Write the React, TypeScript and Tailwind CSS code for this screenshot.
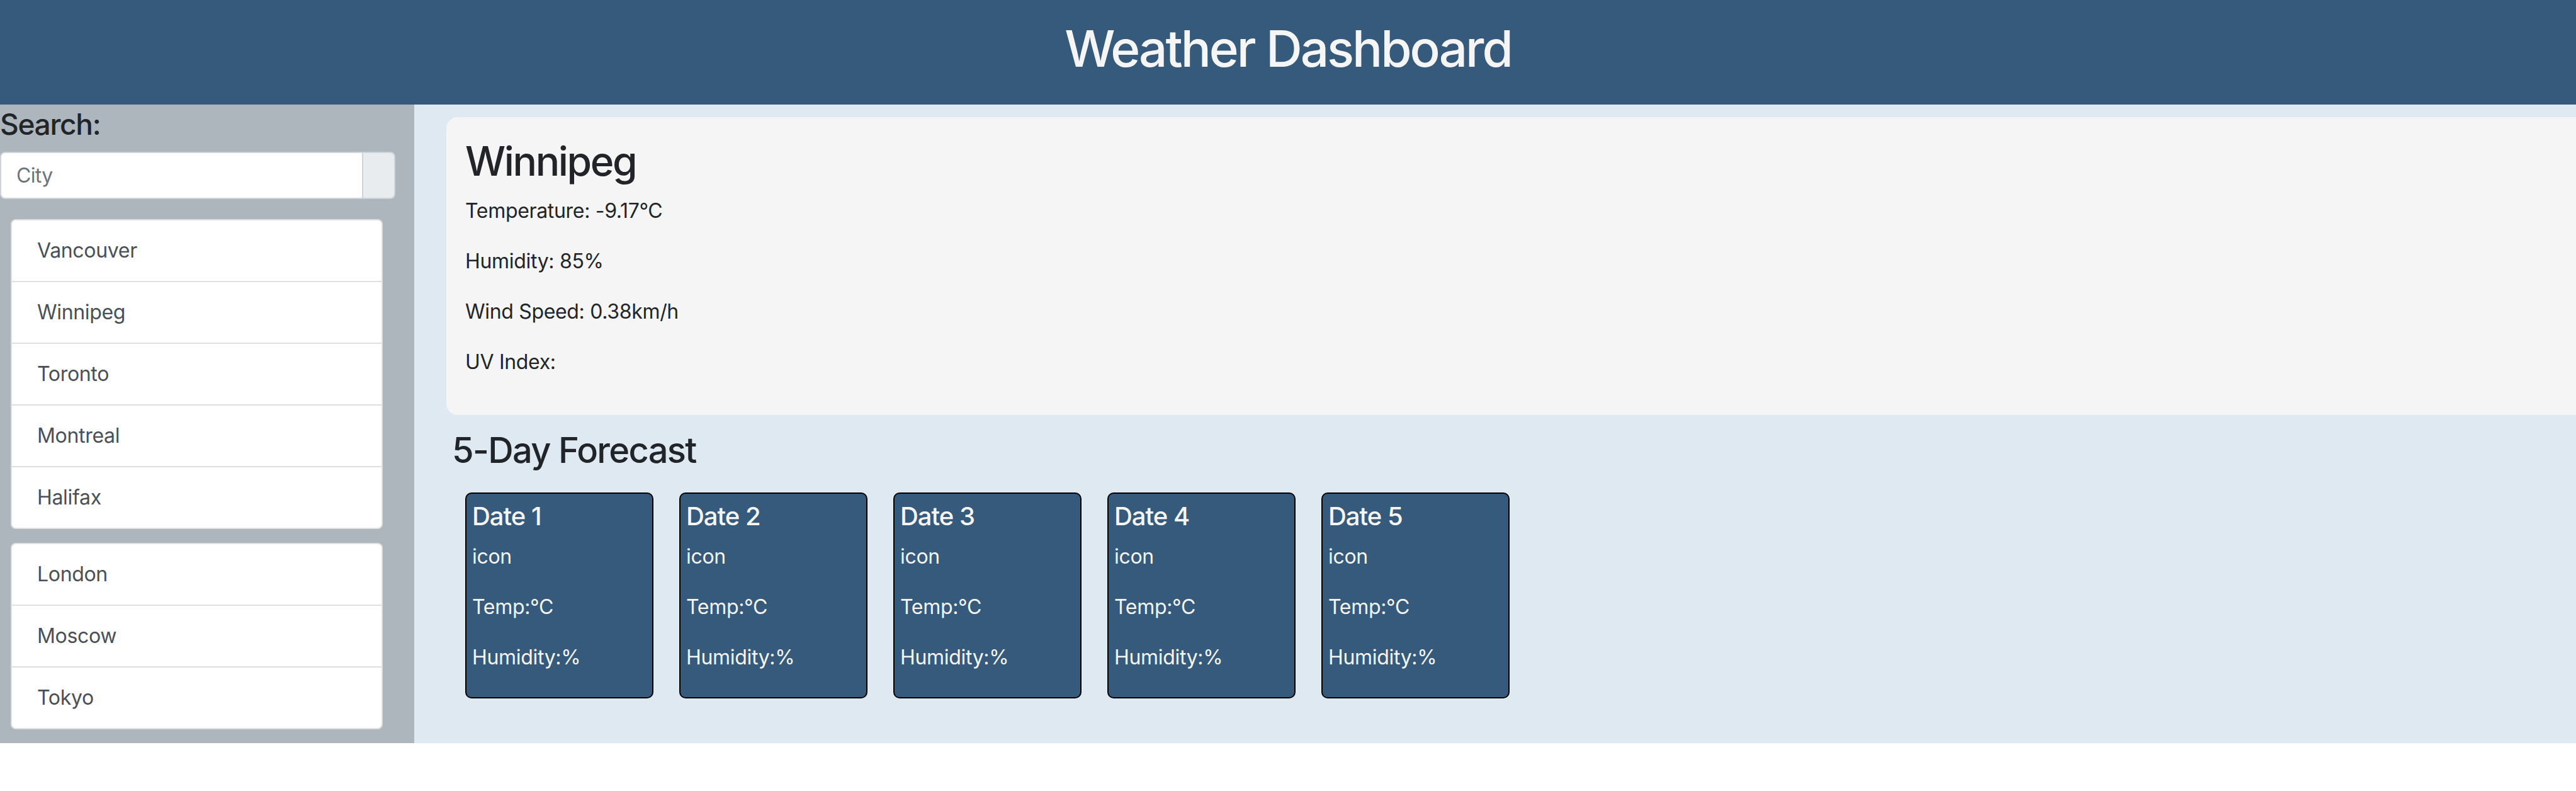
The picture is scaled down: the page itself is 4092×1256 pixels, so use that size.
import React from 'react'

const cityGroups = [
  ['Vancouver', 'Winnipeg', 'Toronto', 'Montreal', 'Halifax'],
  ['London', 'Moscow', 'Tokyo'],
]

const forecast = [1, 2, 3, 4, 5]

export default function App() {
  return (
    <div className="min-h-screen bg-white font-['Inter',sans-serif] tracking-[-0.02em] text-[#212529]">
      <header className="h-[166px] bg-[#355a7b] pt-[29px]">
        <h1 className="text-center text-[80px] leading-[1.2] font-medium tracking-[-0.038em] text-[#f5f5f5]">
          Weather Dashboard
        </h1>
      </header>

      <div className="flex">
        {/* sidebar */}
        <aside className="w-[658px] shrink-0 bg-[#adb5bd] pt-[4px] pb-[22px]">
          <h4 className="text-[46px] leading-[1.2] font-medium tracking-[-0.028em] mb-[16px]">Search:</h4>
          <div className="flex w-[628px] h-[75px]">
            <input
              placeholder="City"
              className="flex-1 min-w-0 bg-white border-2 border-[#ced4da] rounded-l-[8px] px-[24px] text-[32px] tracking-[-0.02em] text-[#495057] placeholder:text-[#6c757d] outline-none"
            />
            <button className="w-[51px] bg-[#e9ecef] border-2 border-l-0 border-[#ced4da] rounded-r-[8px]" />
          </div>

          <div className="ml-[17px] w-[591px] mt-[32px] flex flex-col gap-[22px]">
            {cityGroups.map((group, g) => (
              <ul
                key={g}
                className="bg-white border-2 border-[rgba(0,0,0,0.125)] rounded-[8px] overflow-hidden"
              >
                {group.map((city, i) => (
                  <li
                    key={city}
                    className={
                      i > 0
                        ? 'border-t-2 border-[rgba(0,0,0,0.125)] px-[40px] py-[24px] text-[32px] leading-[48px] text-[#495057]'
                        : 'px-[40px] py-[24px] text-[32px] leading-[48px] text-[#495057]'
                    }
                  >
                    {city}
                  </li>
                ))}
              </ul>
            ))}
          </div>
        </aside>

        {/* main */}
        <main className="flex-1 min-w-0 bg-[#dfe9f2] pb-[67px]">
          <section className="mt-[20px] ml-[51px] bg-[#f5f5f5] rounded-l-[18px] pt-[32px] pb-[28px] px-[30px]">
            <h2 className="text-[64px] leading-[1.2] font-medium tracking-[-0.037em] mb-[16px]">Winnipeg</h2>
            <p className="text-[32px] leading-[48px] mb-[32px]">Temperature: -9.17°C</p>
            <p className="text-[32px] leading-[48px] mb-[32px]">Humidity: 85%</p>
            <p className="text-[32px] leading-[48px] mb-[32px]">Wind Speed: 0.38km/h</p>
            <p className="text-[32px] leading-[48px] mb-[32px]">UV Index:</p>
          </section>

          <h3 className="ml-[60px] mt-[23px] mb-[33px] text-[56px] leading-[1.2] font-medium tracking-[-0.03em]">
            5-Day Forecast
          </h3>

          <div className="flex gap-[41px] ml-[81px]">
            {forecast.map(n => (
              <div
                key={n}
                className="w-[299px] border-2 border-black rounded-[10px] bg-[#355a7b] text-[#f5f5f5] pt-[12px] pb-[7px] px-[9px]"
              >
                <h5 className="text-[40px] leading-[1.2] font-medium tracking-[-0.025em] mb-[16px]">Date {n}</h5>
                <p className="text-[32px] leading-[48px] mb-[32px]">icon</p>
                <p className="text-[32px] leading-[48px] mb-[32px]">Temp:°C</p>
                <p className="text-[32px] leading-[48px] mb-[32px]">Humidity:%</p>
              </div>
            ))}
          </div>
        </main>
      </div>
    </div>
  )
}
